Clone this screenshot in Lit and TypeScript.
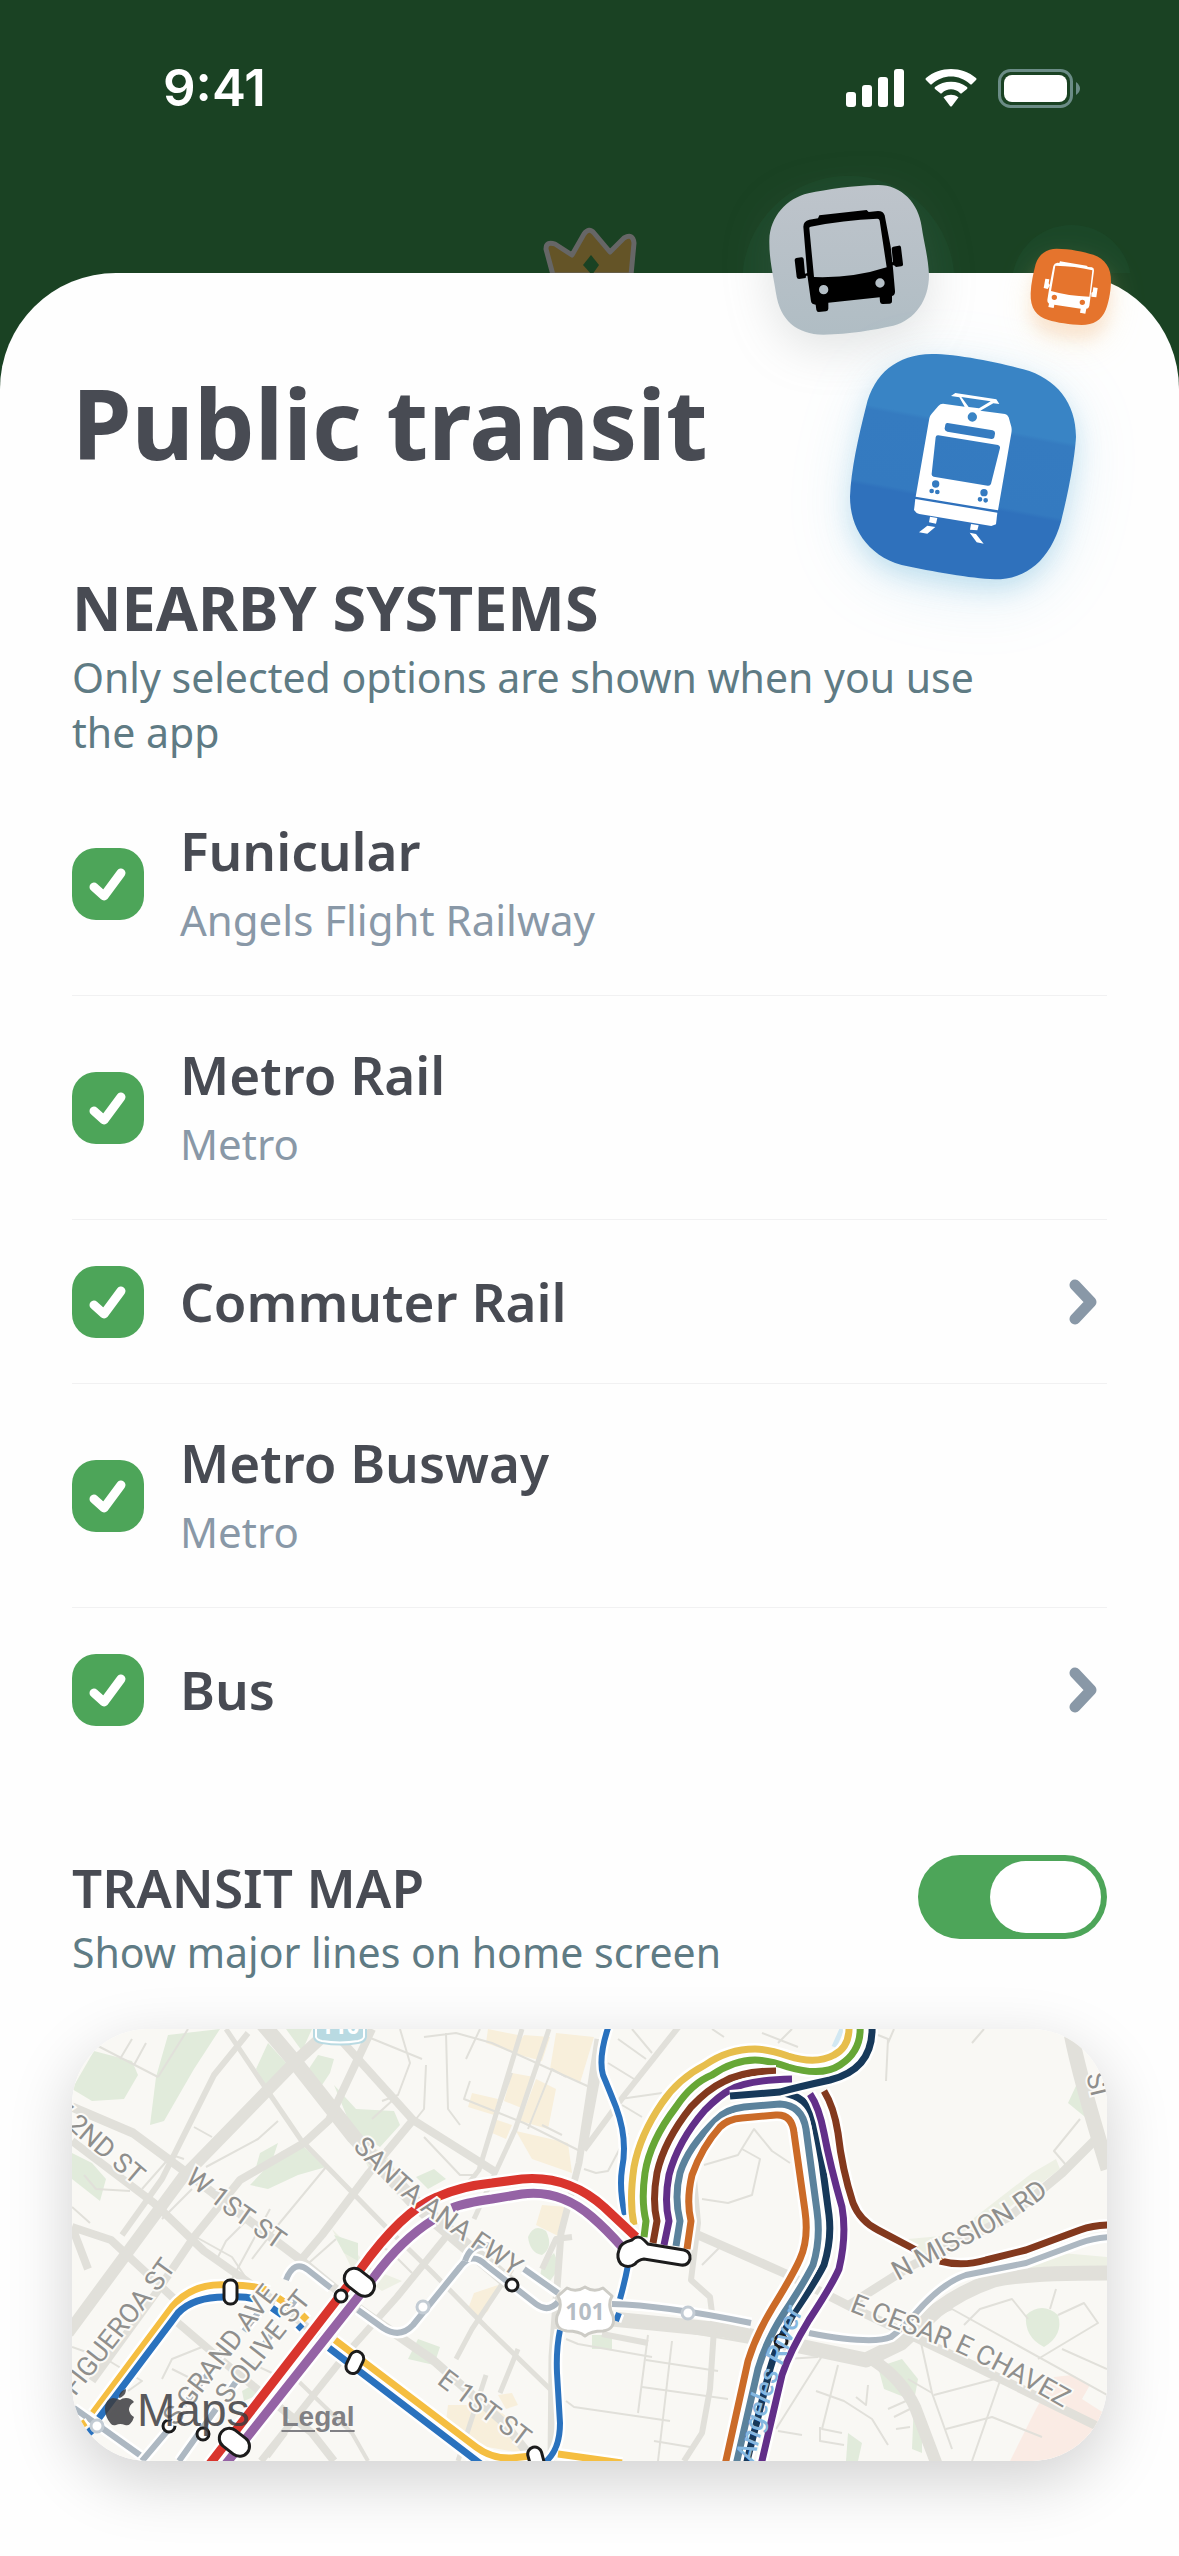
import { css, html, LitElement, nothing, svg } from "lit";
import { customElement, property } from "lit/decorators.js";

interface TransitSystem {
  id: string;
  name: string;
  operator?: string;
  expandable?: boolean;
}

const SYSTEMS: TransitSystem[] = [
  { id: "funicular", name: "Funicular", operator: "Angels Flight Railway" },
  { id: "metro-rail", name: "Metro Rail", operator: "Metro" },
  { id: "commuter-rail", name: "Commuter Rail", expandable: true },
  { id: "metro-busway", name: "Metro Busway", operator: "Metro" },
  { id: "bus", name: "Bus", expandable: true },
];

/* Map geometry, in the units of the 1035 x 432 map view box. */

const GREEN_AREAS = [
  "M0 60 L22 22 L60 32 L66 46 L52 70 L20 72 Z",
  "M96 6 L148 0 L122 40 L92 92 L78 96 L84 48 Z",
  "M0 124 L20 134 L34 150 L28 172 L0 150 Z",
  "M196 14 L216 36 L196 62 L184 40 Z",
  "M214 0 L240 0 L230 22 Z",
  "M246 26 L262 30 L258 44 L246 62 L234 44 Z",
  "M262 56 L284 80 L322 82 L328 96 L308 118 L280 100 Z",
  "M188 124 L206 114 L200 132 L184 138 Z",
  "M210 122 L232 118 L254 138 L226 146 L196 160 L178 156 Z",
  "M344 148 L362 140 L374 150 L356 160 Z",
  "M262 206 L286 214 L286 232 L272 224 Z",
  "M336 330 L346 310 L368 318 L362 336 Z",
  "M456 208 Q462 194 474 202 Q482 218 470 226 Q458 224 456 208 Z",
  "M470 236 L482 224 L488 238 L478 252 L468 248 Z",
  "M170 362 L184 354 L186 366 L172 372 Z",
  "M954 286 Q970 272 986 286 Q992 306 972 318 Q952 308 954 286 Z",
  "M806 338 L830 330 L846 350 L842 372 L812 360 Z",
  "M776 404 L790 414 L786 432 L774 432 Z",
  "M842 372 L850 392 L850 424 L840 420 Z",
  "M520 306 L540 306 L540 320 L520 320 Z",
  "M996 74 L1010 44 L1018 60 L1018 92 Z",
];

const PALE_AREAS = [
  "M836 210 L880 206 L960 144 L984 130 L988 140 L930 184 L880 224 L844 232 Z",
  "M940 246 L1035 240 L1035 228 L990 224 Z",
  "M260 200 L300 240 L330 252 L310 262 L280 240 Z",
  "M282 108 L312 124 L330 150 L296 138 Z",
];

const SAND_AREAS = [
  "M416 0 L446 6 L442 24 L414 14 Z",
  "M452 6 L478 8 L470 32 L440 24 Z",
  "M484 4 L522 8 L508 54 L478 40 Z",
  "M440 44 L462 48 L452 80 L432 72 Z",
  "M400 64 L426 70 L422 86 L396 78 Z",
  "M464 50 L484 60 L476 100 L448 92 Z",
  "M422 90 L440 96 L434 110 L420 104 Z",
  "M444 102 L496 114 L500 144 L460 130 Z",
  "M470 176 L496 178 L488 208 L464 196 Z",
  "M402 264 L426 256 L416 282 L406 290 L396 280 Z",
  "M376 376 L420 376 L440 392 L450 424 L404 416 L374 392 Z",
  "M426 366 L440 364 L446 376 L434 380 Z",
];

const BLUSH_AREAS = [
  "M982 348 L1000 346 L1018 356 L1010 370 L1035 386 L1035 432 L938 432 L964 380 Z",
];

const LANES = [
  "M26 17 L86 48 M60 10 L48 30 M74 14 L62 36 M116 0 L86 48",
  "M244 0 L268 14 M296 8 L350 30 M328 0 L338 34 L326 66 L310 72",
  "M352 8 L384 4 L420 14 L522 60 M354 36 L352 80 L344 90 M374 4 L376 80 L388 96",
  "M394 30 L408 0 M398 52 L392 70 L452 94 L508 122 M420 100 L440 44",
  "M456 100 L480 40 L494 48 M470 96 L490 106",
  "M300 90 L322 70 M352 108 L388 146 L402 146",
  "M12 146 L24 160 L58 162 M0 178 L18 194",
  "M122 98 L140 108 M134 138 L186 110 L206 92",
  "M70 160 L100 126 L112 130 M90 190 L120 160",
  "M124 208 L160 228 L176 252 M144 232 L154 212 L176 190",
  "M180 230 L206 196 L254 138 M160 250 L198 180",
  "M264 210 L230 240 M300 214 L318 222 L340 244",
  "M0 318 L34 330 L70 352 L56 362 M100 340 L124 352",
  "M90 350 L100 330 L130 318 M170 330 L200 344",
  "M494 310 L506 315 L580 328 M494 372 L502 378 L598 392",
  "M576 306 L566 384 M600 312 L586 432 M574 331 L646 342",
  "M570 358 L656 370 M582 412 L618 418 M540 290 L700 318",
  "M680 332 L746 328 M752 324 L704 400 M766 336 L750 400 L770 404",
  "M706 402 L730 406 M744 362 L772 372 L800 390 L816 416",
  "M796 356 L794 376 L784 368 M748 398 L748 412 L772 416",
  "M836 350 L860 364 M852 306 L864 286 L880 280 L1035 366",
  "M846 300 L860 364 L880 420 M862 366 L938 346 M874 400 L920 388 L970 408",
  "M930 346 L900 432 M956 290 L940 270 L908 280 L892 296",
  "M984 260 L978 280 M966 330 L1026 294 L1012 274 L986 286 M990 320 L1035 340",
  "M546 10 L574 30 M560 0 L580 24 M536 34 L562 50 M548 70 L590 64",
  "M550 76 L570 88 M512 140 L524 144 L536 142 L556 104",
  "M632 136 L666 126 L682 100 L700 122 L718 134 M670 120 L688 130 L680 166 L656 174 L630 170",
  "M640 0 L652 8 M690 4 L726 18 M706 14 L720 0",
  "M806 6 L816 10 L814 52 M822 0 L816 14 M900 14 L912 0",
  "M1008 90 L982 122 L994 136 M630 236 L648 218",
  "M816 380 L834 372 M822 388 L838 380 M824 400 L838 398",
];

const ROADS = [
  { width: 15, d: "M190 -6 L223 33 L282 108 L343 174 L440 256" },
  { width: 12, d: "M248 10 L223 33 L111 148 L-4 304" },
  { width: 9, d: "M0 78 L61 104 L111 141 L154 174 L225 228 L289 281 L361 331 L432 394 L462 432" },
  { width: 8, d: "M0 112 L82 174 L132 222 L200 270 L250 310" },
  { width: 8, d: "M0 198 L39 211 L111 278 M0 198 L16 240" },
  { width: 8, d: "M92 282 L160 340 L240 404 L262 432" },
  { width: 8, d: "M268 10 L341 91 L425 144" },
  { width: 8, d: "M300 0 L282 38 L257 91 L232 114 L168 151 L122 208 L84 264 L20 352" },
  { width: 8, d: "M341 91 L297 144 L250 206 L228 232" },
  { width: 7, d: "M526 10 L507 134 L489 204 L480 328 L479 432" },
  { width: 5, d: "M154 0 L197 64 L229 111 L314 198 L361 244 L414 298 L479 361" },
  { width: 7, d: "M377 204 L325 268 L275 324 L189 432" },
  { width: 6, d: "M176 4 L142 46 L90 150 L50 206" },
  { width: 5, d: "M477 0 L443 101 L402 190 M450 0 L407 141 L392 160" },
  { width: 5, d: "M440 240 L400 300 L384 330 M446 320 L428 364 M414 346 L386 432" },
  { width: 4, d: "M220 346 L280 404 L296 432 M214 404 L196 428" },
  { width: 15, d: "M520 288 L651 301 L737 319 L794 331 L829 314 L865 281 Q890 262 922 251 Q950 244 1035 244" },
  { width: 12, d: "M801 331 Q830 350 843 378 L865 436" },
  { width: 9, d: "M626 206 L712 244 L779 278 L880 326 L1035 402" },
  { width: 9, d: "M774 278 L837 238 L937 188 L990 144 L1028 106" },
  { width: 15, d: "M999 4 Q1008 50 1036 140" },
  { width: 6, d: "M608 -4 L551 68 L512 121 M527 40 L512 120" },
  { width: 6, d: "M622 150 L626 194 L619 251 L638 268 L642 300 L638 360 L630 404 L612 432" },
  { width: 6, d: "M470 240 L484 210 L500 208" },
  { width: 6, d: "M530 305 L576 314" },
];

const LINES = [
  { color: "#adb8c2", width: 6, d: "M2 379 L72 429" },
  { color: "#adb8c2", width: 6, d: "M70 432 L102 394 M112 376 L139 341 M146 328 L152 320 M172 302 L186 284" },
  { color: "#adb8c2", width: 6, d: "M107 432 L144 380 M156 364 L166 350 M190 318 L204 300 M214 284 L224 270" },
  { color: "#adb8c2", width: 6, d: "M214 251 Q222 230 236 241 L259 259" },
  { color: "#adb8c2", width: 6, d: "M286 281 L311 299 Q328 310 341 296 L388 238 Q400 222 414 236 L464 275 Q476 284 486 273" },
  { color: "#adb8c2", width: 6, d: "M393 232 Q400 212 418 217 M452 240 L486 264" },
  { color: "#adb8c2", width: 6, d: "M540 275 Q590 276 679 294 M737 304 Q800 316 819 308 Q830 300 844 284 Q870 254 894 246 L954 234 L1008 214 Q1022 209 1038 208" },
  { color: "#2a72be", width: 6, d: "M537 -4 Q526 28 531 46 Q536 58 544 78 Q556 110 550 140 Q547 160 553 186 M556 236 Q553 252 548 270 M547 284 L544 292 M488 301 Q484 320 485 344 L488 394 Q488 422 472 434" },
  { color: "#f5be41", width: 7, d: "M21 384 L100 278 Q120 254 154 256 Q186 256 196 262 M206 269 L218 277 M230 286 L235 291" },
  { color: "#2a72be", width: 7, d: "M27 389 L106 284 Q122 267 157 268 Q172 267 182 270 M200 279 L210 286 M226 296 L230 300" },
  { color: "#f5be41", width: 7, d: "M263 311 L404 418 Q420 430 440 429 L468 426 M486 425 L550 434" },
  { color: "#2a72be", width: 7, d: "M257 319 L397 426 L410 436" },
  { color: "#f5be41", width: 6, d: "M9 392 L13 398" },
  { color: "#2a72be", width: 6, d: "M15 400 L20 406" },
  { color: "#e7be4c", width: 7, d: "M562 196 Q557 172 562 138 Q568 106 590 74 Q606 50 633 36 Q656 20 683 20 Q696 20 716 27 Q744 36 762 26 Q778 18 777 -4" },
  { color: "#67a736", width: 7, d: "M572 208 L574 192 Q569 172 573 144 Q578 112 604 78 Q620 54 640 46 Q662 31 683 31 Q696 31 716 38 Q750 48 768 36 Q790 22 788 -4" },
  { color: "#83391e", width: 7, d: "M581 214 L585 192 Q580 172 585 144 Q592 112 619 78 Q636 60 651 53 Q670 42 704 42" },
  { color: "#622f89", width: 7, d: "M592 216 L597 192 Q592 172 597 146 Q606 112 633 81 Q648 66 658 61 Q674 51 720 50" },
  { color: "#17395a", width: 7, d: "M712 64 Q735 68 741 88 Q745 104 750 134 L757 186 Q760 210 752 236 Q744 252 722 284 Q706 310 698 340 L674 436" },
  { color: "#17395a", width: 7, d: "M658 67 L708 63 Q726 58 758 51 Q802 40 800 -4" },
  { color: "#5b829c", width: 7, d: "M604 217 L608 192 Q602 168 608 144 Q616 118 644 91 Q654 80 672 78 L708 75 Q730 76 734 100 L745 182 Q749 210 741 236 Q732 254 712 284 Q694 312 686 340 L664 436" },
  { color: "#cb6b28", width: 7, d: "M615 220 L619 192 Q614 172 620 146 Q630 118 648 98 Q656 90 670 89 L704 86 Q720 85 722 104 L733 182 Q737 210 728 230 Q722 244 701 278 Q684 306 676 332 L653 436" },
  { color: "#622f89", width: 7, d: "M738 65 Q747 78 752 104 Q758 136 770 178 Q775 206 767 240 Q760 256 737 291 Q718 322 710 346 L689 436" },
  { color: "#83391e", width: 7, d: "M752 62 Q762 78 766 104 Q770 140 781 174 Q788 192 806 201 L844 221 M868 232 Q890 238 914 231 L954 221 L1008 201 Q1022 196 1038 196" },
  { color: "#9563a5", width: 9, d: "M153 436 L302 248 Q330 210 361 191 M380 179 Q392 174 420 170 L450 165 Q488 160 520 188 Q534 200 550 218" },
  { color: "#d9352d", width: 9, d: "M137 436 L288 241 Q330 182 365 168 Q390 157 420 154 L450 150 Q496 146 532 178 L564 208" },
];

const STREET_LABELS = [
  { id: "second", text: "W 2ND ST", d: "M-28 76 L8 110 L140 222" },
  { id: "first-w", text: "W 1ST ST", d: "M112 152 L164 192 L240 246" },
  { id: "santa-ana", text: "SANTA ANA FWY", d: "M280 118 Q320 162 344 178 L402 220 L520 302" },
  { id: "figueroa", text: "FIGUEROA ST", d: "M3 368 L96 250 L160 160" },
  { id: "grand", text: "S GRAND AVE", d: "M104 398 L230 234 L280 170" },
  { id: "olive", text: "S OLIVE ST", d: "M156 376 L256 250 L300 196" },
  { id: "first-e", text: "E 1ST ST", d: "M364 354 L460 426 L520 470" },
  { id: "mission", text: "N MISSION RD", d: "M826 252 L887 219 Q940 196 992 152 L1020 122" },
  { id: "chavez", text: "E CESAR E CHAVEZ", d: "M777 282 L887 324 Q960 358 1060 420" },
  { id: "side", text: "SI", d: "M1014 46 L1030 110" },
];

const ROUND_STOPS = [
  [269, 267],
  [440, 256],
  [97, 397],
  [131, 405],
  [709, 312],
];

const BUSWAY_STOPS = [
  [351, 278],
  [25, 397],
  [616, 284],
];

@customElement("transit-status-bar")
export class TransitStatusBar extends LitElement {
  static override styles = css`
    :host {
      display: flex;
      align-items: center;
      justify-content: space-between;
      height: 176px;
      padding: 0 98px 0 163px;
      color: #ffffff;
      font: 600 51px/56px Inter, sans-serif;
    }

    .indicators {
      display: flex;
      align-items: center;
      gap: 21px;
    }

    svg {
      display: block;
    }
  `;

  override render() {
    return html`
      <time>9:41</time>
      <div class="indicators">
        <svg width="58" height="38" viewBox="0 0 58 38" fill="#ffffff" aria-hidden="true">
          <rect y="23" width="10" height="15" rx="3" />
          <rect x="16" y="16" width="10" height="22" rx="3" />
          <rect x="32" y="8" width="10" height="30" rx="3" />
          <rect x="48" width="10" height="38" rx="3" />
        </svg>
        <svg width="52" height="38" viewBox="0 0 52 38" fill="#ffffff" aria-hidden="true">
          <path d="M1 11 Q0 10 1 9 C15 -3 37 -3 51 9 Q52 10 51 11 L47 15 Q46 16 45 15 C34 5 18 5 7 15 Q6 16 5 15 Z" />
          <path d="M10 20 Q9 19 10 18 C19 11 33 11 42 18 Q43 19 42 20 L37 24 Q36 25 35 24 C30 19 22 19 17 24 Q16 25 15 24 Z" />
          <path d="M19 29 Q18 28 19 28 C23 25 29 25 33 28 Q34 28 33 29 L27 37 Q26 38 25 37 Z" />
        </svg>
        <svg width="83" height="39" viewBox="0 0 83 39" aria-hidden="true">
          <rect x="1.500" y="1.500" width="72" height="36" rx="11" fill="none" stroke="#6b8c86" stroke-width="3" />
          <rect x="6" y="6" width="63" height="27" rx="8" fill="#ffffff" />
          <path d="M78 13 Q82 16 82 19.500 Q82 23 78 26 Z" fill="#6b8c86" />
        </svg>
      </div>
    `;
  }
}

@customElement("transit-modes-art")
export class TransitModesArt extends LitElement {
  static override styles = css`
    :host {
      display: block;
      pointer-events: none;
    }

    svg {
      display: block;
      overflow: visible;
    }

    .tile-grey {
      filter: drop-shadow(0 40px 70px rgba(110, 120, 120, 0.2));
    }

    .tile-orange {
      filter: drop-shadow(0 44px 22px rgba(242, 170, 120, 0.24))
        drop-shadow(0 40px 50px rgba(240, 220, 150, 0.2));
    }

    .tile-blue {
      filter: drop-shadow(0 30px 36px rgba(80, 170, 210, 0.26))
        drop-shadow(0 40px 90px rgba(80, 170, 220, 0.16));
    }
  `;

  override render() {
    return html`
      <svg width="459" height="480" viewBox="0 0 1377 1440" aria-hidden="true">
        <defs>
          <linearGradient id="grey" x1="0" y1="0" x2="0" y2="1">
            <stop offset="0" stop-color="#bec4cb" />
            <stop offset="1" stop-color="#b0bdc4" />
          </linearGradient>
          <linearGradient id="blue" gradientUnits="userSpaceOnUse" x1="790" y1="600" x2="670" y2="1240">
            <stop offset="0.3" stop-color="#3984c5" />
            <stop offset="0.32" stop-color="#357bc0" />
            <stop offset="0.65" stop-color="#347ac0" />
            <stop offset="0.67" stop-color="#2f71bc" />
          </linearGradient>
        </defs>

        <circle cx="385" cy="365" r="318" fill="#215c3c" opacity="0.22" clip-path="inset(0 0 344px 0)" />
        <circle cx="1055" cy="375" r="180" fill="#215c3c" opacity="0.22" clip-path="inset(0 0 216px 0)" />

        <path class="tile-grey" fill="url(#grey)" d="M475 75 C545 75 596 130 605 200 C612 250 625 290 627 345 C627 420 585 480 520 497 C460 510 390 522 310 524 C230 524 180 480 168 400 C160 345 147 300 148 240 C150 170 200 115 265 100 C320 88 400 76 475 75 Z" />
        <g fill="#000000">
          <path fill-rule="evenodd" d="M250 200 Q250 183 268 179 L294 175 L298 166 L440 150 L446 156 L474 153 Q490 153 494 166 L512 260 L519 325 L525 393 Q526 405 516 408 L516 424 Q516 431 508 431 L488 432 Q481 432 480 425 L479 412 L325 428 L325 446 Q325 453 318 454 L296 456 Q290 456 289 449 L287 434 Q275 434 273 424 L262 345 Z
            M268 205 Q267 201 272 200 Q370 180 472 176 Q478 176 479 182 L500 322 Q400 355 282 351 Z
            M297 389 a14 14 0 1 0 28 0 a14 14 0 1 0 -28 0 Z
            M466 369 a14 14 0 1 0 28 0 a14 14 0 1 0 -28 0 Z" />
          <path d="M224 300 Q224 295 229 294 L244 292 Q250 291 251 297 L255 341 L266 338 L266 347 L258 347 L257 354 L237 357 Q231 357 230 351 Z" />
          <path d="M515 266 Q515 261 520 260 L536 257 Q542 256 543 262 L549 312 Q550 318 544 319 L528 321 L522 316 L512 316 L512 308 L519 306 Z" />
        </g>

        <path class="tile-orange" fill="#e5742d" d="M1010 266 C1050 266 1090 275 1120 284 C1155 295 1175 325 1173 365 C1172 400 1165 430 1157 450 C1145 480 1120 495 1085 495 C1050 494 1010 488 985 480 C950 470 930 445 932 400 C933 370 940 340 947 312 C957 282 980 266 1010 266 Z" />
        <g fill="#ffffff">
          <path fill-rule="evenodd" d="M1000 318 Q1003 309 1012 308 L1018 309 L1020 304 L1100 317 L1104 321 L1116 322 Q1123 324 1122 332 L1108 437 Q1106 446 1099 446 L1096 461 L1080 458 L1082 446 L1003 434 L1001 444 L985 441 L987 431 Q981 428 982 420 L990 370 Z
            M1006 317 Q1065 318 1117 331 L1108 410 Q1045 408 993 393 Z
            M995 412 a8 8 0 1 0 16 0 a8 8 0 1 0 -16 0 Z
            M1079 427 a8 8 0 1 0 16 0 a8 8 0 1 0 -16 0 Z" />
          <path d="M976 356 L988 358 L986 370 L990 376 L983 387 L971 384 Z" />
          <path d="M1120 382 L1133 384 L1129 412 L1114 410 L1114 398 L1118 396 Z" />
        </g>

        <path class="tile-blue" fill="url(#blue)" d="M635 582 C710 582 830 606 910 628 C1010 655 1068 730 1068 830 C1065 890 1045 1000 1023 1085 C990 1200 920 1258 825 1258 C750 1255 640 1235 545 1215 C440 1185 390 1100 390 1010 C393 930 415 830 438 740 C462 640 530 584 635 582 Z" />
        <g fill="#ffffff">
          <path fill-rule="evenodd" d="M693 708 L706 699 L829 718 L838 732 L820 730 L781 752 L855 762 Q862 763 866 772 L874 800 Q876 808 874 820 L834 1051 L587 1010 L628 775 Q630 766 635 761 L655 738 Q661 731 669 731 L734 740 L718 712 Z
            M724 711 L812 724 L777 745 L746 741 Z
            M743 771 a14 14 0 1 0 28 0 a14 14 0 1 0 -28 0 Z
            M676 794 Q677 788 683 789 L818 811 Q826 813 825 821 L823 832 Q821 838 814 837 L682 815 Q673 813 674 805 Z
            M647 832 Q648 825 655 826 L834 855 Q841 857 840 864 L813 971 Q811 978 803 977 L641 950 Q634 948 635 941 Z
            M636 972 a11 11 0 1 0 22 0 a11 11 0 1 0 -22 0 Z
            M781 998 a11 11 0 1 0 22 0 a11 11 0 1 0 -22 0 Z
            M628 993 a7 7 0 1 0 14 0 a7 7 0 1 0 -14 0 Z
            M645 996 a7 7 0 1 0 14 0 a7 7 0 1 0 -14 0 Z
            M773 1018 a7 7 0 1 0 14 0 a7 7 0 1 0 -14 0 Z
            M790 1021 a7 7 0 1 0 14 0 a7 7 0 1 0 -14 0 Z" />
          <path d="M586 1017 L832 1058 L828 1093 L814 1098 L598 1062 Q588 1060 582 1050 Z" />
          <path d="M630 1070 L652 1074 L648 1091 L627 1087 Z M753 1092 L776 1096 L772 1111 L750 1109 Z" />
          <path d="M622 1097 L646 1101 L622 1121 L597 1117 Z M749 1118 L768 1122 L791 1151 L770 1147 Z" />
        </g>
      </svg>
    `;
  }
}

@customElement("transit-system-row")
export class TransitSystemRow extends LitElement {
  static override styles = css`
    :host {
      display: flex;
      align-items: center;
      gap: 36px;
      box-sizing: border-box;
      min-height: 163px;
      color: #484b53;
    }

    :host([operator]) {
      min-height: 223px;
    }

    .box {
      display: grid;
      flex: none;
    }

    .box > * {
      grid-area: 1 / 1;
    }

    input {
      appearance: none;
      width: 72px;
      height: 72px;
      margin: 0;
      border-radius: 24px;
      background: #4da559;
    }

    .tick {
      width: 72px;
      height: 72px;
      pointer-events: none;
    }

    label {
      flex: 1;
    }

    .name {
      display: block;
      font-size: 53px;
      font-weight: 600;
      line-height: 72px;
    }

    .operator {
      display: block;
      color: #8998a7;
      font-size: 42px;
      line-height: 66px;
    }

    button {
      display: block;
      margin: 0;
      padding: 0 10px;
      border: 0;
      background: none;
    }

    button svg {
      display: block;
    }
  `;

  @property()
  declare name: string;

  @property({ reflect: true })
  declare operator: string | undefined;

  @property({ type: Boolean })
  declare expandable: boolean;

  override render() {
    return html`
      <span class="box">
        <input id="selected" type="checkbox" checked />
        <svg class="tick" viewBox="0 0 72 72" fill="none" aria-hidden="true">
          <path d="M22 39 L32 48 L49 25" stroke="#ffffff" stroke-width="9" stroke-linecap="round" stroke-linejoin="round" />
        </svg>
      </span>
      <label for="selected">
        <span class="name">${this.name}</span>
        ${this.operator ? html`<span class="operator">${this.operator}</span>` : nothing}
      </label>
      ${this.expandable
        ? html`
            <button type="button" aria-label="${this.name} options">
              <svg width="28" height="46" viewBox="0 0 28 46" fill="none" aria-hidden="true">
                <path d="M6 6 L22 23 L6 40" stroke="#8998a7" stroke-width="11" stroke-linecap="round" stroke-linejoin="round" />
              </svg>
            </button>
          `
        : nothing}
    `;
  }
}

@customElement("transit-map")
export class TransitMap extends LitElement {
  static override styles = css`
    :host {
      display: block;
      position: relative;
      border-radius: 76px;
      overflow: hidden;
      background: #f9f8f4;
    }

    .map {
      display: block;
      width: 100%;
      height: auto;
    }

    .road,
    .lane,
    .line,
    .casing {
      fill: none;
      stroke-linejoin: round;
    }

    .road {
      stroke: #e1e0da;
    }

    .lane {
      stroke: #e1e0da;
      stroke-width: 2px;
    }

    .casing {
      stroke: #ffffff;
    }

    .street {
      fill: #8f8f8d;
      stroke: #fbfaf7;
      stroke-width: 4px;
      paint-order: stroke;
      font: 400 27px Roboto, sans-serif;
    }

    .river {
      fill: #85b7e0;
      font: italic 500 27px Roboto, sans-serif;
    }

    .shield {
      fill: #b5bdc4;
      font: 700 23px "Open Sans", sans-serif;
    }

    .shield-interstate {
      fill: #ffffff;
      font: 700 23px "Open Sans", sans-serif;
    }

    .stop {
      fill: #ffffff;
      stroke: #1c1c1c;
      stroke-width: 3px;
    }

    .busway-stop {
      fill: #ffffff;
      stroke: #c3ccd4;
      stroke-width: 3px;
    }

    .attribution {
      position: absolute;
      left: 32px;
      bottom: 18px;
      display: flex;
      align-items: baseline;
      color: rgba(60, 60, 64, 0.85);
      font: 400 46px/52px "Liberation Sans", sans-serif;
    }

    .attribution svg {
      margin-right: 2px;
    }

    a {
      margin-left: 32px;
      color: #808084;
      font-size: 28px;
      font-weight: 700;
      text-underline-offset: 4px;
    }
  `;

  override render() {
    return html`
      <svg class="map" viewBox="0 0 1035 432" role="img" aria-label="Transit lines around downtown">
        ${PALE_AREAS.map((d) => svg`<path d=${d} fill="#edf0e4" />`)}
        ${GREEN_AREAS.map((d) => svg`<path d=${d} fill="#e1ebdb" />`)}
        ${SAND_AREAS.map((d) => svg`<path d=${d} fill="#f8efdb" />`)}
        ${BLUSH_AREAS.map((d) => svg`<path d=${d} fill="#faebe4" />`)}
        <path d="M770 0 L762 18" stroke="#d2e8f2" stroke-width="5" />
        ${LANES.map((d) => svg`<path class="lane" d=${d} />`)}
        ${ROADS.map((r) => svg`<path class="road" d=${r.d} stroke-width=${r.width} />`)}

        ${LINES.map(
          (l) => svg`
            <path class="casing" d=${l.d} stroke-width=${l.width + 5} />
            <path class="line" d=${l.d} stroke=${l.color} stroke-width=${l.width} />
          `,
        )}

        <path d="M241 -4 L241 8 Q242 14 250 15 Q268 18 286 15 Q294 14 295 8 L295 -4 Z" fill="#b9dae2" />
        <path d="M244 -4 L244 8 Q245 11 250 12 Q268 15 286 12 Q291 11 292 8 L292 -4" fill="none" stroke="#ffffff" stroke-width="2" />
        <text class="shield-interstate" x="268" y="5" text-anchor="middle">110</text>

        <path d="M495 259 Q504 264 513 258 Q522 264 531 259 L540 267 Q535 276 541 287 Q544 300 531 302 Q519 302 513 307 Q507 302 495 302 Q482 300 485 287 Q491 276 486 267 Z" fill="#ffffff" stroke="#cdccc6" stroke-width="3" stroke-linejoin="round" />
        <text class="shield" x="513" y="291" text-anchor="middle">101</text>

        ${BUSWAY_STOPS.map(([x, y]) => svg`<circle class="busway-stop" cx=${x} cy=${y} r="6" />`)}
        ${ROUND_STOPS.map(([x, y]) => svg`<circle class="stop" cx=${x} cy=${y} r="6" />`)}
        <rect class="stop" x="152" y="251" width="13" height="24" rx="6" />
        <rect class="stop" x="276" y="322" width="14" height="23" rx="7" transform="rotate(25 283 333)" />
        <rect class="stop" x="456" y="418" width="14" height="24" rx="7" transform="rotate(-15 463 426)" />
        <rect class="stop" x="271" y="243" width="33" height="20" rx="10" transform="rotate(38 287 253)" />
        <rect class="stop" x="146" y="403" width="33" height="20" rx="10" transform="rotate(38 162 413)" />
        <path class="stop" d="M560 211 Q566 205 572 211 L576 215 L612 221 Q619 223 618 230 Q616 237 609 236 L572 230 Q566 231 563 235 Q556 240 549 235 Q544 229 547 221 Q548 214 560 211 Z" />

        ${STREET_LABELS.map(
          (s) => svg`
            <path id=${s.id} d=${s.d} fill="none" />
            <text class="street"><textPath href=${`#${s.id}`}>${s.text}</textPath></text>
          `,
        )}
        <path id="river" d="M662 530 L682 432 Q698 366 709 340 L738 262" fill="none" />
        <text class="river"><textPath href="#river" startOffset="98">Angeles River</textPath></text>
      </svg>
      <div class="attribution">
        <svg width="31" height="37" viewBox="0 0 31 37" fill="currentColor" aria-hidden="true">
          <path d="M22 0 Q22 5 19 7 Q17 9 15 9 Q15 5 17 3 Q19 1 22 0 Z" />
          <path d="M16 11 Q18 9 22 9 Q27 9 30 13 Q25 16 25 21 Q26 26 30 28 Q29 32 26 35 Q24 37 21 36 Q16 34 12 36 Q9 37 7 35 Q1 28 1 20 Q1 10 9 9 Q12 9 16 11 Z" />
        </svg>
        <span>Maps</span>
        <a href="#legal">Legal</a>
      </div>
    `;
  }
}

@customElement("app-root")
export class AppRoot extends LitElement {
  static override styles = css`
    :host {
      display: flex;
      flex-direction: column;
      min-height: 100vh;
      background: #1a4223;
      font-family: "Noto Sans", "Open Sans", sans-serif;
    }

    .crown {
      display: flex;
      justify-content: center;
      padding-top: 51px;
    }

    .crown svg {
      display: block;
    }

    .sheet {
      position: relative;
      flex: 1;
      padding: 62px 72px 95px;
      border-radius: 116px 116px 0 0;
      background: #fefefe;
      color: #484b53;
    }

    .art {
      position: absolute;
      top: -113px;
      right: 0;
    }

    h1,
    h2,
    p,
    ul {
      margin: 0;
      padding: 0;
    }

    h1 {
      font-size: 96px;
      font-weight: 700;
      line-height: 176px;
    }

    .systems-heading {
      padding-top: 55px;
      font-size: 61px;
      font-weight: 700;
      line-height: 84px;
    }

    .hint {
      max-width: 960px;
      color: #5f7b84;
      font-size: 41px;
      line-height: 55px;
    }

    ul {
      padding-top: 12px;
      list-style: none;
    }

    li + li {
      border-top: 1px solid #f1f1f2;
    }

    .map-setting {
      display: flex;
      align-items: flex-start;
      justify-content: space-between;
      padding: 80px 0 49px;
    }

    .map-heading {
      font-size: 53px;
      font-weight: 600;
      line-height: 74px;
    }

    .toggle {
      appearance: none;
      display: flex;
      flex: none;
      justify-content: flex-end;
      box-sizing: border-box;
      width: 189px;
      height: 84px;
      margin: 4px 0 0;
      padding: 6px;
      border-radius: 42px;
      background: #4da559;
    }

    .toggle::before {
      content: "";
      width: 111px;
      border-radius: 36px;
      background: #ffffff;
    }

    .map-card {
      border-radius: 76px;
      box-shadow: 0 20px 64px rgba(0, 0, 0, 0.18);
    }
  `;

  override render() {
    return html`
      <transit-status-bar></transit-status-bar>
      <div class="crown">
        <svg width="94" height="46" viewBox="0 0 94 46" aria-hidden="true">
          <path d="M10 48 L3 22 Q3 14 12 17 L29 28 L41 7 Q46 0 51 6 L67 25 L81 11 Q90 6 91 16 L88 48 Z" fill="#645427" stroke="#666666" stroke-width="5" stroke-linejoin="round" />
          <path d="M48 28 L56 38 L49 48 L40 38 Z" fill="#1a4223" />
        </svg>
      </div>
      <main class="sheet">
        <transit-modes-art class="art"></transit-modes-art>
        <h1>Public transit</h1>
        <h2 class="systems-heading">NEARBY SYSTEMS</h2>
        <p class="hint">Only selected options are shown when you use the app</p>
        <ul>
          ${SYSTEMS.map(
            (s) => html`
              <li>
                <transit-system-row
                  id=${s.id}
                  .name=${s.name}
                  .operator=${s.operator}
                  ?expandable=${s.expandable}
                ></transit-system-row>
              </li>
            `,
          )}
        </ul>
        <div class="map-setting">
          <label for="map-toggle">
            <h2 class="map-heading">TRANSIT MAP</h2>
            <p class="hint">Show major lines on home screen</p>
          </label>
          <input id="map-toggle" class="toggle" type="checkbox" role="switch" checked />
        </div>
        <div class="map-card">
          <transit-map></transit-map>
        </div>
      </main>
    `;
  }
}

declare global {
  interface HTMLElementTagNameMap {
    "app-root": AppRoot;
    "transit-status-bar": TransitStatusBar;
    "transit-modes-art": TransitModesArt;
    "transit-system-row": TransitSystemRow;
    "transit-map": TransitMap;
  }
}
